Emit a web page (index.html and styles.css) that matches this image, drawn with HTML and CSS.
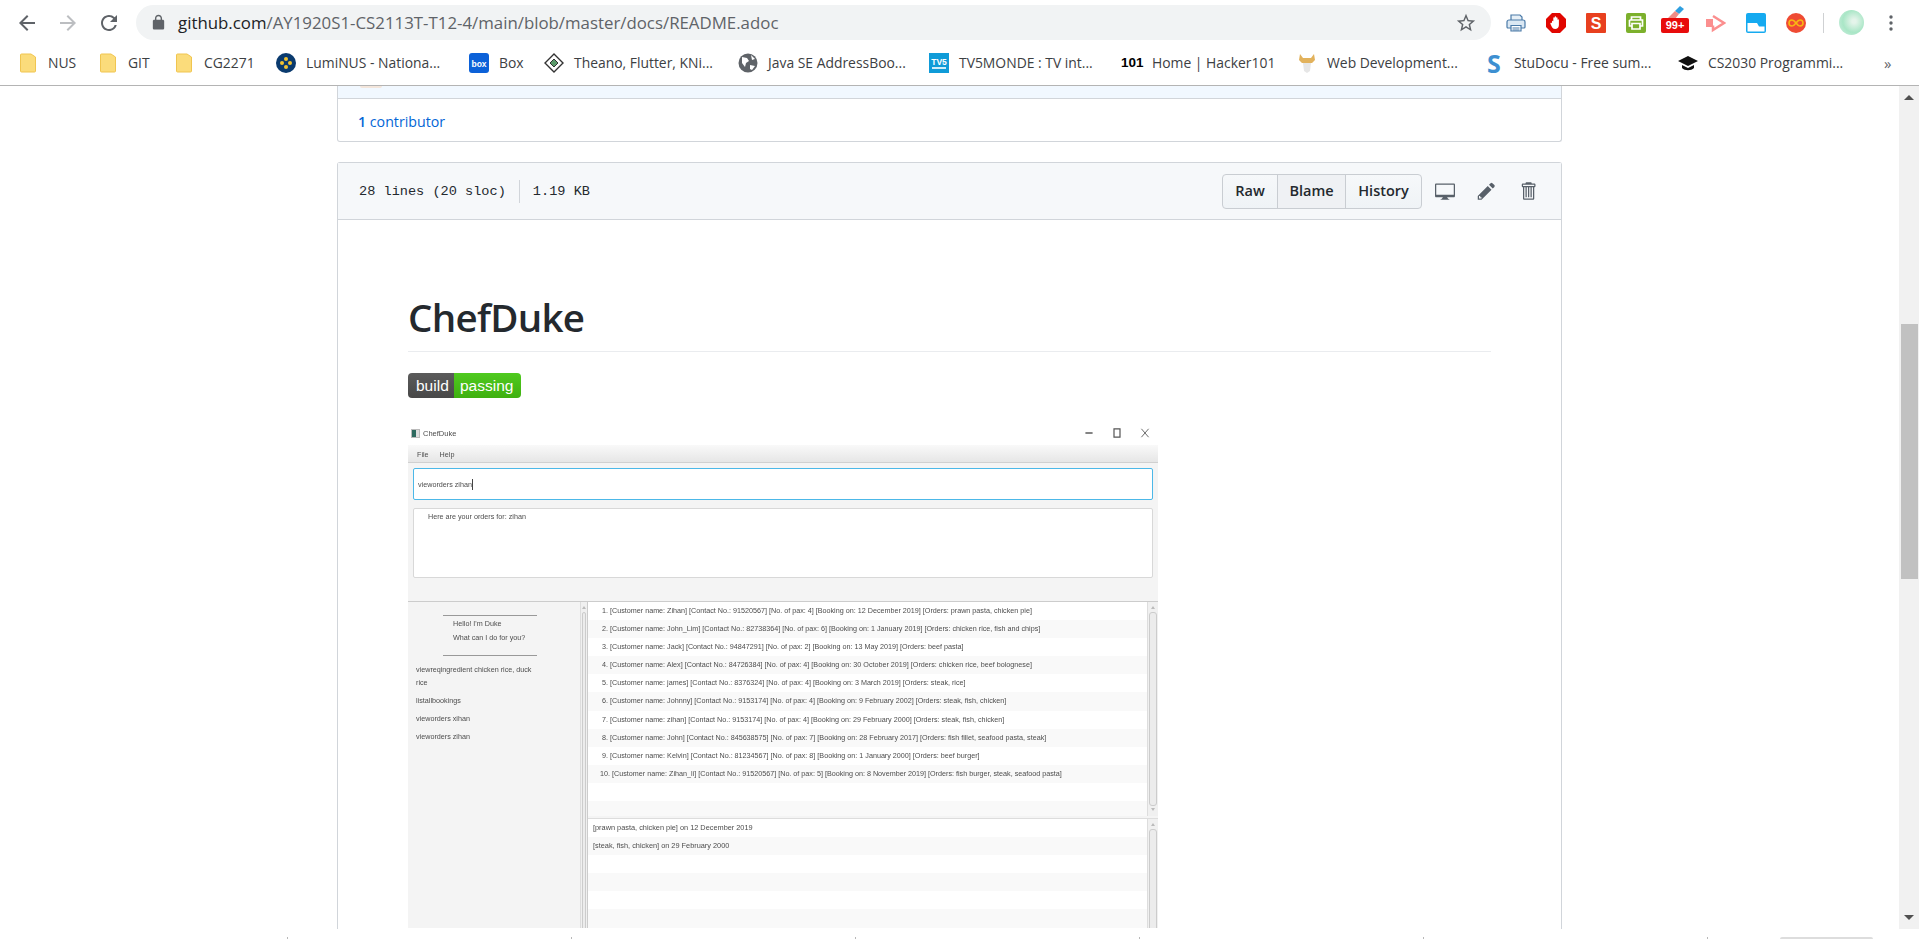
FILE: index.html
```html
<!DOCTYPE html>
<html lang="en">
<head>
<meta charset="utf-8">
<title>ChefDuke README</title>
<link rel="stylesheet" href="styles.css">
</head>
<body>
<header class="chrome">
  <div class="toolbar">
    <nav class="nav">
      <svg class="nav-icon" viewBox="0 0 24 24"><path fill="#5f6368" d="M20 11H7.83l5.59-5.59L12 4l-8 8 8 8 1.41-1.41L7.83 13H20v-2z"/></svg>
      <svg class="nav-icon" viewBox="0 0 24 24"><path fill="#bcbec1" d="M12 4l-1.41 1.41L16.17 11H4v2h12.17l-5.58 5.59L12 20l8-8z"/></svg>
      <svg class="nav-icon" viewBox="0 0 24 24"><path fill="#5f6368" d="M17.65 6.35A7.958 7.958 0 0 0 12 4c-4.42 0-7.99 3.58-7.99 8s3.57 8 7.99 8c3.73 0 6.84-2.55 7.73-6h-2.08A5.99 5.99 0 0 1 12 18c-3.31 0-6-2.69-6-6s2.69-6 6-6c1.66 0 3.14.69 4.22 1.78L13 11h7V4l-2.35 2.35z"/></svg>
    </nav>
    <div class="omnibox">
      <svg class="lock" viewBox="0 0 24 24"><path fill="#5f6368" d="M18 8h-1V6c0-2.76-2.24-5-5-5S7 3.24 7 6v2H6c-1.1 0-2 .9-2 2v10c0 1.1.9 2 2 2h12c1.1 0 2-.9 2-2V10c0-1.1-.9-2-2-2zM9 6c0-1.66 1.34-3 3-3s3 1.34 3 3v2H9V6z"/></svg>
      <span class="url"><span class="host">github.com</span>/AY1920S1-CS2113T-T12-4/main/blob/master/docs/README.adoc</span>
      <svg class="star" viewBox="0 0 24 24"><path fill="#5f6368" d="M22 9.24l-7.19-.62L12 2 9.19 8.63 2 9.24l5.46 4.73L5.82 21 12 17.27 18.18 21l-1.63-7.03L22 9.24zM12 15.4l-3.76 2.27 1-4.28-3.32-2.88 4.38-.38L12 6.1l1.71 4.04 4.38.38-3.32 2.88 1 4.28L12 15.4z"/></svg>
    </div>
    <div class="extensions">
      <svg class="ext" viewBox="0 0 20 20"><g stroke="#4a7aa8" stroke-width="1.2"><path fill="#e6eff6" d="M5 7V2h9l2 2v3"/><path fill="#dbe8f3" d="M3 7h14a2 2 0 0 1 2 2v5a1 1 0 0 1-1 1H2a1 1 0 0 1-1-1V9a2 2 0 0 1 2-2z"/><path fill="#fff" d="M5 12.500h10V18H5z"/><path fill="none" d="M6.500 15h7M6.500 17h7"/></g></svg>
      <svg class="ext" viewBox="0 0 20 20"><path fill="#e10600" d="M6 0h8l6 6v8l-6 6H6l-6-6V6z"/><path fill="#fff" d="M6 8.500c0-.9 1.300-.9 1.300 0V5c0-1 1.400-1 1.400 0V4c0-1 1.400-1 1.400 0v1c0-1 1.400-1 1.400 0v2c0-.9 1.400-.9 1.400 0v5c0 2.500-1.600 4-3.800 4-1.700 0-2.500-.8-3.200-2L4.500 11c-.5-1 .8-1.600 1.500-.8z"/></svg>
      <svg class="ext" viewBox="0 0 20 20"><rect width="20" height="20" rx="1" fill="#e8401f"/><text x="10" y="15.500" class="ext-s">S</text></svg>
      <svg class="ext" viewBox="0 0 20 20"><rect width="20" height="20" rx="2" fill="#7cb02c"/><path fill="none" stroke="#fff" stroke-width="1.700" d="M5.500 7V4h9v3M3.500 7h13v6h-2M3.500 7v6h2M6 10.500h8v5.500H6z"/></svg>
      <div class="eraser">
        <svg class="eraser-icon" viewBox="0 0 22 16"><path fill="#2f9fe0" d="M12 6l5-5 4 3-5 5z"/><path fill="#ef8b86" d="M12 6l4 3-4 5H6l-1-1z"/></svg>
        <span class="badge-count">99+</span>
      </div>
      <svg class="ext" viewBox="0 0 20 20"><path fill="none" stroke="#fb8f8f" stroke-width="2.500" d="M7 3l11 7-11 7v-4.500"/><path fill="#fb8f8f" d="M0 6h7v8H0z"/></svg>
      <svg class="ext" viewBox="0 0 20 20"><rect width="20" height="20" rx="2" fill="#15aaf0"/><path fill="#fff" d="M1.500 10H11l2 3.500h5.500V18.500h-17z"/></svg>
      <svg class="ext" viewBox="0 0 20 20"><circle cx="10" cy="10" r="10" fill="#ef4b33"/><path fill="none" stroke="#f9b912" stroke-width="1.600" d="M10 10c-1.500-2-2.500-3-4-3a3 3 0 0 0 0 6c1.500 0 2.500-1 4-3s2.500-3 4-3a3 3 0 0 1 0 6c-1.500 0-2.500-1-4-3z"/></svg>
      <div class="sep"></div>
      <div class="avatar"></div>
      <svg class="dots" viewBox="0 0 4 16"><g fill="#5f6368"><circle cx="2" cy="2" r="1.700"/><circle cx="2" cy="8" r="1.700"/><circle cx="2" cy="14" r="1.700"/></g></svg>
    </div>
  </div>
  <div class="bookmarks">
    <a class="bm"><svg class="fav" viewBox="0 0 16 20"><path fill="#fbdc7b" stroke="#f0c550" d="M.5 2a1 1 0 0 1 1-1H11l4.500 3v14a1 1 0 0 1-1 1h-13a1 1 0 0 1-1-1z"/></svg><span>NUS</span></a>
    <a class="bm"><svg class="fav" viewBox="0 0 16 20"><path fill="#fbdc7b" stroke="#f0c550" d="M.5 2a1 1 0 0 1 1-1H11l4.500 3v14a1 1 0 0 1-1 1h-13a1 1 0 0 1-1-1z"/></svg><span>GIT</span></a>
    <a class="bm"><svg class="fav" viewBox="0 0 16 20"><path fill="#fbdc7b" stroke="#f0c550" d="M.5 2a1 1 0 0 1 1-1H11l4.500 3v14a1 1 0 0 1-1 1h-13a1 1 0 0 1-1-1z"/></svg><span>CG2271</span></a>
    <a class="bm"><svg class="fav wide" viewBox="0 0 20 20"><circle cx="10" cy="10" r="10" fill="#0a3a6e"/><g fill="#f2c230"><circle cx="10" cy="6" r="2"/><circle cx="6" cy="10" r="2"/><circle cx="14" cy="10" r="2"/><circle cx="10" cy="14" r="2"/></g></svg><span>LumiNUS - Nationa...</span></a>
    <a class="bm"><svg class="fav wide" viewBox="0 0 20 20"><rect width="20" height="20" rx="3" fill="#0c61d8"/><text x="10" y="13.500" class="fav-box">box</text></svg><span>Box</span></a>
    <a class="bm"><svg class="fav wide" viewBox="0 0 20 20"><path fill="#fff" stroke="#333" stroke-width="1.400" d="M10 1l9 9-9 9-9-9z"/><path fill="#5a9a6a" stroke="#333" d="M10 6l4 4-4 4-4-4z"/></svg><span>Theano, Flutter, KNi...</span></a>
    <a class="bm"><svg class="fav wide" viewBox="0 0 20 20"><circle cx="10" cy="10" r="9.500" fill="#5f6368"/><path fill="#fff" d="M4 4l5 1 2 3-3 2-1 4-3-4zM13 2l4 4-3 1zM12 12l5 1-3 4-2-1z"/></svg><span>Java SE AddressBoo...</span></a>
    <a class="bm"><svg class="fav wide" viewBox="0 0 20 20"><rect width="20" height="20" fill="#0f9bd8"/><text x="10" y="11.500" class="fav-tv">TV5</text><rect x="3" y="14" width="14" height="2" fill="#cfeefa"/></svg><span>TV5MONDE : TV int...</span></a>
    <a class="bm"><b class="fav-101">101</b><span>Home | Hacker101</span></a>
    <a class="bm"><svg class="fav wide" viewBox="0 0 20 20"><path fill="#e2b25c" d="M3 1l3 4h8l3-4 1 6-3 3H5L2 7z"/><path fill="#e6e6e6" d="M6 10h8l-1 8-3 2-3-2z"/></svg><span>Web Development...</span></a>
    <a class="bm"><span class="fav-s">S</span><span>StuDocu - Free sum...</span></a>
    <a class="bm"><svg class="fav wide" viewBox="0 0 20 20"><path fill="#111" d="M10 3L0 8l10 5 10-5zM4 12v3c3 3 9 3 12 0v-3l-6 3z"/></svg><span>CS2030 Programmi...</span></a>
    <a class="bm"><span class="more">»</span></a>
  </div>
</header>

<div class="viewport">
  <main class="page">
    <section class="box meta">
      <div class="meta-strip"><i class="avatar-cut"></i></div>
      <div class="meta-row"><a class="contrib"><b>1</b> contributor</a></div>
    </section>

    <section class="box file">
      <div class="file-head">
        <div class="file-info"><span>28 lines (20 sloc)</span><span class="info-size">1.19 KB</span></div>
        <div class="actions">
          <div class="btn-group"><a class="btn raw">Raw</a><a class="btn blame">Blame</a><a class="btn history">History</a></div>
          <svg class="oct desktop" viewBox="0 0 16 16"><path d="M15 2H1c-.55 0-1 .45-1 1v9c0 .55.45 1 1 1h5.340c-.25.61-.86 1.390-2.340 2h8c-1.480-.61-2.090-1.390-2.340-2H15c.55 0 1-.45 1-1V3c0-.55-.45-1-1-1zm0 9H1V3h14v8z"/></svg>
          <svg class="oct pencil" viewBox="0 0 14 16"><path d="M0 12v3h3l8-8-3-3-8 8zm3 2H1v-2h1v1h1v1zm10.300-9.300L12 6 9 3l1.300-1.300a.996.996 0 0 1 1.410 0l1.590 1.590c.39.39.39 1.020 0 1.410z"/></svg>
          <svg class="oct trash" viewBox="0 0 12 16"><path d="M11 2H9c0-.55-.45-1-1-1H5c-.55 0-1 .45-1 1H2c-.55 0-1 .45-1 1v1c0 .55.45 1 1 1v9c0 .55.45 1 1 1h7c.55 0 1-.45 1-1V5c.55 0 1-.45 1-1V3c0-.55-.45-1-1-1zm-1 12H3V5h1v8h1V5h1v8h1V5h1v8h1V5h1v9zm1-10H2V3h9v1z"/></svg>
        </div>
      </div>
      <article class="readme">
        <h1>ChefDuke</h1>
        <div class="ci"><span class="ci-l">build</span><span class="ci-r">passing</span></div>
        <div class="app">
          <div class="app-title">
            <i class="app-icon"></i><span>ChefDuke</span>
            <div class="win-ctl">
              <svg viewBox="0 0 8 10" class="wc"><path d="M1 5h6" stroke="#333"/></svg>
              <svg viewBox="0 0 8 10" class="wc"><path d="M1.500 1.500h5v7h-5z" fill="none" stroke="#555"/></svg>
              <svg viewBox="0 0 8 10" class="wc"><path d="M1 1.500l6 7M7 1.500l-6 7" stroke="#666" stroke-width=".8"/></svg>
            </div>
          </div>
          <div class="app-menu"><span>File</span><span>Help</span></div>
          <div class="app-main">
            <div class="app-input">vieworders zihan<i class="caret"></i></div>
            <div class="app-output">Here are your orders for: zihan</div>
          </div>
          <div class="app-split">
            <div class="chat">
              <div class="greet">
                <hr class="rule">
                <p>Hello! I'm Duke</p>
                <p>What can I do for you?</p>
                <hr class="rule">
              </div>
              <p class="cmd two">viewreqingredient chicken rice, duck<br>rice</p>
              <p class="cmd">listallbookings</p>
              <p class="cmd">vieworders xihan</p>
              <p class="cmd">vieworders zihan</p>
            </div>
            <div class="sb side"><i class="sb-up"></i><i class="sb-thumb"></i></div>
            <div class="lists">
              <div class="list-wrap top">
                <ol class="list">
                  <li>1. [Customer name: Zihan] [Contact No.: 91520567] [No. of pax: 4] [Booking on: 12 December 2019] [Orders: prawn pasta, chicken pie]</li>
                  <li>2. [Customer name: John_Lim] [Contact No.: 82738364] [No. of pax: 6] [Booking on: 1 January 2019] [Orders: chicken rice, fish and chips]</li>
                  <li>3. [Customer name: Jack] [Contact No.: 94847291] [No. of pax: 2] [Booking on: 13 May 2019] [Orders: beef pasta]</li>
                  <li>4. [Customer name: Alex] [Contact No.: 84726384] [No. of pax: 4] [Booking on: 30 October 2019] [Orders: chicken rice, beef bolognese]</li>
                  <li>5. [Customer name: james] [Contact No.: 8376324] [No. of pax: 4] [Booking on: 3 March 2019] [Orders: steak, rice]</li>
                  <li>6. [Customer name: Johnny] [Contact No.: 9153174] [No. of pax: 4] [Booking on: 9 February 2002] [Orders: steak, fish, chicken]</li>
                  <li>7. [Customer name: zihan] [Contact No.: 9153174] [No. of pax: 4] [Booking on: 29 February 2000] [Orders: steak, fish, chicken]</li>
                  <li>8. [Customer name: John] [Contact No.: 845638575] [No. of pax: 7] [Booking on: 28 February 2017] [Orders: fish fillet, seafood pasta, steak]</li>
                  <li>9. [Customer name: Kelvin] [Contact No.: 81234567] [No. of pax: 8] [Booking on: 1 January 2000] [Orders: beef burger]</li>
                  <li class="ten">10. [Customer name: Zihan_li] [Contact No.: 91520567] [No. of pax: 5] [Booking on: 8 November 2019] [Orders: fish burger, steak, seafood pasta]</li>
                  <li></li>
                  <li></li>
                </ol>
                <div class="sb"><i class="sb-up"></i><i class="sb-thumb"></i><i class="sb-down"></i></div>
              </div>
              <div class="list-wrap bottom">
                <ol class="list orders">
                  <li>[prawn pasta, chicken pie] on 12 December 2019</li>
                  <li>[steak, fish, chicken] on 29 February 2000</li>
                  <li></li>
                  <li></li>
                  <li></li>
                  <li></li>
                </ol>
                <div class="sb"><i class="sb-up"></i><i class="sb-thumb"></i></div>
              </div>
            </div>
          </div>
        </div>
      </article>
    </section>
  </main>
  <aside class="scrollbar">
    <i class="arrow up"></i>
    <i class="thumb"></i>
    <i class="arrow down"></i>
  </aside>
</div>
<footer class="cutoff">
  <i class="tick"></i><i class="tick"></i><i class="tick"></i><i class="tick"></i><i class="tick"></i><i class="tick"></i>
  <i class="cut-btn"></i>
</footer>
</body>
</html>
```
FILE: styles.css
```css
* { box-sizing: border-box; }
html, body { margin: 0; height: 939px; overflow: hidden; background: #fff; }
body { display: flex; flex-direction: column; font-family: "Open Sans", "Noto Sans", sans-serif; color: #24292e; }
i { display: block; }
p { margin: 0; }

/* browser chrome */
.chrome { height: 86px; flex: none; border-bottom: 1px solid #b4b4b4; background: #fff; }
.toolbar { display: flex; align-items: center; height: 35px; margin-top: 5px; padding-left: 15px; }
.nav { display: flex; gap: 17px; }
.nav-icon { width: 24px; height: 24px; display: block; }
.omnibox { display: flex; align-items: center; width: 1355px; height: 35px; margin-left: 15px; padding: 0 14px; border-radius: 18px; background: #f1f3f4; }
.lock { width: 17px; height: 17px; flex: none; }
.url { margin-left: 11px; font-size: 16.83px; color: #5f6368; white-space: nowrap; }
.host { color: #202124; }
.star { width: 22px; height: 22px; margin-left: auto; }
.extensions { display: flex; align-items: center; gap: 20px; margin-left: 15px; }
.ext { width: 20px; height: 20px; display: block; }
.ext-s { font: 700 16px "Liberation Sans", sans-serif; fill: #fff; text-anchor: middle; }
.eraser { position: relative; width: 20px; height: 20px; }
.eraser-icon { position: absolute; left: -3px; top: -8px; width: 22px; height: 16px; }
.badge-count { position: absolute; left: -5px; top: 5px; width: 28px; height: 15px; border-radius: 2px; background: #e80c0c; color: #fff; font: 700 11px/15px "Liberation Sans", sans-serif; text-align: center; }
.sep { width: 1px; height: 20px; background: #cfd1d3; margin-left: -3px; margin-right: -5px; }
.avatar { width: 25px; height: 25px; border-radius: 50%; background: radial-gradient(circle at 60% 45%, #e4f4ea 10%, #a9e6c6 55%, #d3f0e4 100%); }
.dots { width: 4px; height: 16px; margin-left: 5px; }

.bookmarks { display: grid; grid-template-columns: 80px 76px 100px 193px 75px 194px 191px 192px 176px 190px 191px 206px 20px; height: 45px; padding-left: 20px; align-items: center; }
.bm { display: flex; align-items: center; gap: 12px; font-size: 13.9px; color: #3c4043; white-space: nowrap; }
.bm:nth-child(n+4) { gap: 10px; }
.fav { width: 16px; height: 20px; flex: none; }
.fav.wide { width: 20px; }
.fav-box { font: 700 8.5px "Liberation Sans", sans-serif; fill: #fff; text-anchor: middle; }
.fav-tv { font: 700 8.5px "Liberation Sans", sans-serif; fill: #fff; text-anchor: middle; }
.fav-101 { width: 21px; font: 700 13.5px "Liberation Sans", sans-serif; color: #000; }
.fav-s { width: 17px; font: 700 25px/20px "Open Sans", sans-serif; color: #3d8fd1; }
.more { font-size: 15px; color: #5f6368; }

/* viewport */
.viewport { display: flex; height: 843px; flex: none; overflow: hidden; }
.page { flex: 1; min-width: 0; padding: 0 337px; overflow: hidden; }
.box { border: 1px solid #d1d5da; }
.meta { height: 56px; border-top: 0; border-radius: 0 0 3px 3px; }
.meta-strip { height: 13px; background: #f1f8ff; border-bottom: 1px solid #d1d5da; }
.avatar-cut { width: 22px; height: 2px; margin-left: 22px; background: #f3e6dc; border-radius: 0 0 8px 8px; }
.meta-row { height: 42px; padding: 2px 0 0 20px; display: flex; align-items: center; font-size: 14.2px; color: #0366d6; }
.contrib b { font-weight: 600; }

.file { margin-top: 20px; height: 800px; border-radius: 3px 3px 0 0; border-bottom: 0; }
.file-head { display: flex; align-items: center; justify-content: space-between; height: 57px; padding: 0 20px 0 21px; background: #f6f8fa; border-bottom: 1px solid #d1d5da; }
.file-info { display: flex; align-items: center; font: 13.6px "Liberation Mono", monospace; color: #24292e; }
.info-size { margin-left: 13px; padding-left: 13px; line-height: 23px; border-left: 1px solid #d1d5da; }
.actions { display: flex; align-items: center; }
.btn-group { display: flex; height: 35px; border: 1px solid #c9cdd2; border-radius: 4px; background: linear-gradient(#f6f8fa, #eff3f6); }
.btn { display: flex; align-items: center; justify-content: center; padding-bottom: 2px; font-size: 14.5px; font-weight: 600; color: #24292e; }
.raw { width: 54px; }
.blame { width: 69px; border-left: 1px solid #c9cdd2; border-right: 1px solid #c9cdd2; background: #eff1f4; }
.history { width: 75px; }
.oct { display: block; fill: #586069; height: 20px; }
.desktop { width: 22px; margin-left: 12px; }
.pencil { width: 19px; margin-left: 21px; }
.trash { width: 16px; margin-left: 24px; margin-right: 5px; }

.readme { padding: 72px 70px 0; }
h1 { margin: 0; height: 60px; border-bottom: 1px solid #eaecef; font-size: 38.5px; line-height: 50px; font-weight: 600; letter-spacing: -.7px; color: #24292e; }
.ci { display: flex; width: 113px; height: 25px; margin-top: 21px; border-radius: 4px; overflow: hidden; font: 15.5px/25px "Liberation Sans", sans-serif; color: #fff; }
.ci-l { width: 46px; padding-left: 8px; background: linear-gradient(#5b5b5b, #484848); }
.ci-r { flex: 1; padding-left: 6px; background: linear-gradient(#4fca1f, #3fb010); }

/* screenshot of the desktop app */
.app { width: 750px; height: 509px; margin-top: 21px; overflow: hidden; background: #f4f4f4; color: #4d4d4d; font: 7.2px "Liberation Sans", sans-serif; filter: blur(.25px); }
.app-title { display: flex; align-items: center; height: 26px; padding: 2px 0 0 3px; background: #fff; font-size: 7.5px; }
.app-icon { width: 9px; height: 9px; margin-right: 3px; background: linear-gradient(90deg, #2d6a5f 60%, #ddd 60%); border: 1px solid #bbb; }
.win-ctl { display: flex; gap: 18px; margin-left: auto; margin-right: 8px; }
.wc { width: 10px; height: 12px; }
.app-menu { display: flex; gap: 11px; align-items: center; height: 18px; padding: 1px 0 0 9px; background: linear-gradient(#f9f9f9, #e6e6e6); border-bottom: 1px solid #d0d0d0; }
.app-main { padding: 5px 5px 0; height: 138px; }
.app-input { display: flex; align-items: center; height: 32px; padding-left: 4px; background: #fff; border: 1.5px solid #4cb8e8; border-radius: 2px; }
.caret { width: 1px; height: 11px; background: #444; }
.app-output { height: 70px; margin-top: 8px; padding: 3px 0 0 14px; background: #fff; border: 1px solid #d8d8d8; border-radius: 2px; }
.app-split { display: flex; height: 327px; border-top: 1px solid #ccc; }
.chat { width: 172px; flex: none; padding-left: 8px; }
.greet { width: 130px; padding-left: 37px; line-height: 14px; }
.greet .rule { width: 94px; height: 1px; margin: 13px 0 1px -10px; border: 0; background: #999; }
.greet .rule:last-child { margin: 10px 0 7px -10px; }
.cmd { margin-bottom: 5px; line-height: 13px; }
.sb { width: 11px; flex: none; padding: 2px 1px; background: #f0f0f0; border-left: 1px solid #ddd; }
.sb-up { width: 0; height: 0; margin: 2px auto 3px; border: 2.5px solid transparent; border-top: 0; border-bottom: 3px solid #bbb; }
.sb-thumb { height: 194px; background: #ececec; border: 1px solid #ccc; border-radius: 3px; }
.sb-down { width: 0; height: 0; margin: 2px auto 0; border: 2.5px solid transparent; border-bottom: 0; border-top: 3px solid #bbb; }
.side { width: 8px; border-right: 1px solid #ccc; }
.side .sb-thumb { height: 400px; }
.lists { flex: 1; min-width: 0; display: flex; flex-direction: column; }
.list-wrap { display: flex; background: #fff; overflow: hidden; }
.top { height: 214px; }
.bottom { flex: 1; margin-top: 2px; border-top: 1px solid #ddd; }
.list { flex: 1; min-width: 0; margin: 0; padding: 0; list-style: none; }
.list li { height: 18.1px; padding-left: 14px; line-height: 18.5px; white-space: nowrap; }
.list li:nth-child(even) { background: #f9f9f9; }
.list li.ten { padding-left: 12px; }
.orders li { padding-left: 5px; font-size: 7.35px; }

/* page scrollbar */
.scrollbar { width: 20px; flex: none; display: flex; flex-direction: column; align-items: center; background: #f1f1f1; }
.arrow { width: 0; height: 0; border: 5px solid transparent; }
.up { margin-top: 9px; border-top: 0; border-bottom: 5px solid #505050; }
.down { margin-top: auto; margin-bottom: 9px; border-bottom: 0; border-top: 5px solid #505050; }
.thumb { width: 17px; height: 255px; margin-top: 224px; background: #c1c1c1; }

/* cut off strip below the page */
.cutoff { display: flex; height: 10px; padding: 8px 0 0 287px; gap: 283px; position: relative; }
.tick { width: 1px; height: 2px; background: #b8b8b8; flex: none; }
.cut-btn { position: absolute; left: 1780px; bottom: 0; width: 93px; height: 2px; background: #ddd; border-radius: 2px 2px 0 0; }
```
